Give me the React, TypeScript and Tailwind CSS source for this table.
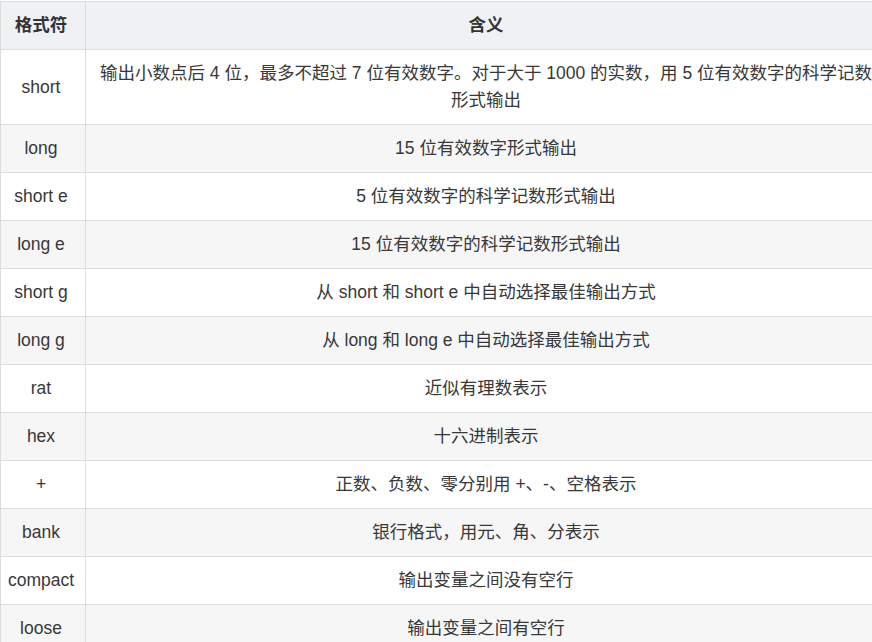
const rows: [string, string][] = [
  ['short', '输出小数点后 4 位，最多不超过 7 位有效数字。对于大于 1000 的实数，用 5 位有效数字的科学记数形式输出'],
  ['long', '15 位有效数字形式输出'],
  ['short e', '5 位有效数字的科学记数形式输出'],
  ['long e', '15 位有效数字的科学记数形式输出'],
  ['short g', '从 short 和 short e 中自动选择最佳输出方式'],
  ['long g', '从 long 和 long e 中自动选择最佳输出方式'],
  ['rat', '近似有理数表示'],
  ['hex', '十六进制表示'],
  ['+', '正数、负数、零分别用 +、-、空格表示'],
  ['bank', '银行格式，用元、角、分表示'],
  ['compact', '输出变量之间没有空行'],
  ['loose', '输出变量之间有空行'],
]

export default function App() {
  return (
    <div
      className="w-[872px] h-[642px] overflow-hidden bg-white pt-px text-[#383838] text-[17.5px] leading-[27px]"
      style={{ fontFamily: '"Liberation Sans", "Noto Sans CJK SC", sans-serif' }}
    >
      <table className="w-[887px] table-fixed border-collapse text-center">
        <colgroup>
          <col className="w-[85px]" />
          <col />
        </colgroup>
        <thead>
          <tr className="bg-[#eff1f3]">
            <th className="border border-[#dddddd] pl-[4px] pr-[8px] py-[10px] font-bold text-[#333]">格式符</th>
            <th className="border border-[#dddddd] px-[10px] py-[10px] font-bold text-[#333]">含义</th>
          </tr>
        </thead>
        <tbody>
          {rows.map(([fmt, desc], i) => (
            <tr key={fmt} className={i % 2 === 1 ? 'bg-[#f6f6f6]' : 'bg-white'}>
              <td className="border border-[#dddddd] pl-[4px] pr-[8px] py-[10px] whitespace-nowrap">{fmt}</td>
              <td className="border border-[#dddddd] px-[10px] py-[10px]">{desc}</td>
            </tr>
          ))}
        </tbody>
      </table>
    </div>
  )
}
